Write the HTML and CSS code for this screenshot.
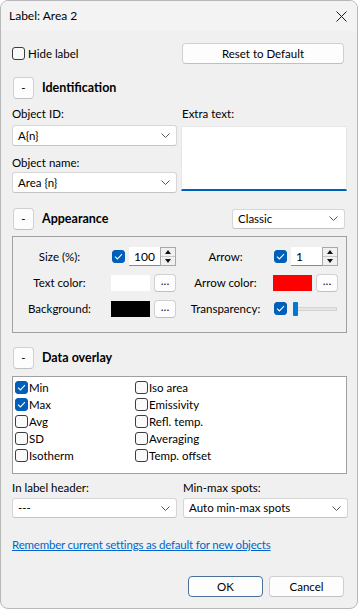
FILE: index.html
```html
<!DOCTYPE html>
<html>
<head>
<meta charset="utf-8">
<link rel="stylesheet" href="styles.css">
</head>
<body>
<div class="window">
  <div class="titlebar">
    <span class="title">Label: Area 2</span>
    <svg class="close" width="11" height="11" viewBox="0 0 11 11"><path d="M0.5 0.5 L10.5 10.5 M10.5 0.5 L0.5 10.5" stroke="#1a1a1a" stroke-width="1" fill="none"/></svg>
  </div>
  <div class="content">
    <div class="pair toprow">
      <div class="check"><span class="cb"></span><span>Hide label</span></div>
      <div class="btn reset">Reset to Default</div>
    </div>

    <div class="section-head">
      <div class="btn toggle">-</div><span class="sec-title">Identification</span>
    </div>
    <div class="pair ident">
      <div class="col">
        <div class="lbl first">Object ID:</div>
        <div class="combo c1"><span>A{n}</span><svg class="chev" width="9" height="5" viewBox="0 0 9 5"><path d="M0.5 0.5 L4.5 4.5 L8.5 0.5" stroke="#555" fill="none"/></svg></div>
        <div class="lbl second">Object name:</div>
        <div class="combo c2"><span>Area {n}</span><svg class="chev" width="9" height="5" viewBox="0 0 9 5"><path d="M0.5 0.5 L4.5 4.5 L8.5 0.5" stroke="#555" fill="none"/></svg></div>
      </div>
      <div class="col">
        <div class="lbl first">Extra text:</div>
        <div class="textarea"></div>
      </div>
    </div>

    <div class="section-head appear-head">
      <div class="btn toggle">-</div><span class="sec-title">Appearance</span>
      <div class="combo classic"><span>Classic</span><svg class="chev" width="9" height="5" viewBox="0 0 9 5"><path d="M0.5 0.5 L4.5 4.5 L8.5 0.5" stroke="#555" fill="none"/></svg></div>
    </div>
    <div class="group">
      <div class="glbl l1">Size (%):</div>
      <div class="ctrl">
        <span class="cb checked"><svg width="9" height="7" viewBox="0 0 9 7"><path d="M1 3.6 L3.4 6 L8 1.2" stroke="#fff" stroke-width="1.1" fill="none"/></svg></span>
        <div class="spin-input">100</div>
        <div class="spinner"><span class="up"></span><span class="down"></span></div>
      </div>
      <div class="glbl l2">Arrow:</div>
      <div class="ctrl">
        <span class="cb checked"><svg width="9" height="7" viewBox="0 0 9 7"><path d="M1 3.6 L3.4 6 L8 1.2" stroke="#fff" stroke-width="1.1" fill="none"/></svg></span>
        <div class="spin-input">1</div>
        <div class="spinner"><span class="up"></span><span class="down"></span></div>
      </div>

      <div class="glbl l1">Text color:</div>
      <div class="ctrl">
        <div class="swatch white"></div>
        <div class="btn dots">...</div>
      </div>
      <div class="glbl l2">Arrow color:</div>
      <div class="ctrl">
        <div class="swatch red"></div>
        <div class="btn dots">...</div>
      </div>

      <div class="glbl l1">Background:</div>
      <div class="ctrl">
        <div class="swatch black"></div>
        <div class="btn dots">...</div>
      </div>
      <div class="glbl l2">Transparency:</div>
      <div class="ctrl">
        <span class="cb checked"><svg width="9" height="7" viewBox="0 0 9 7"><path d="M1 3.6 L3.4 6 L8 1.2" stroke="#fff" stroke-width="1.1" fill="none"/></svg></span>
        <div class="slider"><span class="track"></span><span class="thumb"></span></div>
      </div>
    </div>

    <div class="section-head overlay-head">
      <div class="btn toggle">-</div><span class="sec-title">Data overlay</span>
    </div>
    <div class="overlay">
      <div class="check item"><span class="cb checked"><svg width="9" height="7" viewBox="0 0 9 7"><path d="M1 3.6 L3.4 6 L8 1.2" stroke="#fff" stroke-width="1.1" fill="none"/></svg></span><span>Min</span></div>
      <div class="check item"><span class="cb"></span><span>Iso area</span></div>
      <div class="check item"><span class="cb checked"><svg width="9" height="7" viewBox="0 0 9 7"><path d="M1 3.6 L3.4 6 L8 1.2" stroke="#fff" stroke-width="1.1" fill="none"/></svg></span><span>Max</span></div>
      <div class="check item"><span class="cb"></span><span>Emissivity</span></div>
      <div class="check item"><span class="cb"></span><span>Avg</span></div>
      <div class="check item"><span class="cb"></span><span>Refl. temp.</span></div>
      <div class="check item"><span class="cb"></span><span>SD</span></div>
      <div class="check item"><span class="cb"></span><span>Averaging</span></div>
      <div class="check item"><span class="cb"></span><span>Isotherm</span></div>
      <div class="check item"><span class="cb"></span><span>Temp. offset</span></div>
    </div>

    <div class="pair bottom">
      <div class="col">
        <div class="lbl">In label header:</div>
        <div class="combo c3"><span>---</span><svg class="chev" width="9" height="5" viewBox="0 0 9 5"><path d="M0.5 0.5 L4.5 4.5 L8.5 0.5" stroke="#555" fill="none"/></svg></div>
      </div>
      <div class="col">
        <div class="lbl">Min-max spots:</div>
        <div class="combo c3"><span>Auto min-max spots</span><svg class="chev" width="9" height="5" viewBox="0 0 9 5"><path d="M0.5 0.5 L4.5 4.5 L8.5 0.5" stroke="#555" fill="none"/></svg></div>
      </div>
    </div>

    <div class="link">Remember current settings as default for new objects</div>

    <div class="actions">
      <div class="btn action ok">OK</div>
      <div class="btn action">Cancel</div>
    </div>
  </div>
</div>
</body>
</html>
```

FILE: styles.css
```css
* { box-sizing: border-box; }
html, body { margin: 0; padding: 0; background: #ffffff; }
body {
  font-family: "Lato", "Noto Sans", sans-serif;
  font-size: 11.5px;
  color: #000;
}
.window {
  width: 358px;
  height: 609px;
  border: 1px solid #b8b8b8;
  border-radius: 8px;
  background: #f0f0f0;
  overflow: hidden;
}
.titlebar {
  height: 30px;
  background: #f3f3f3;
  display: flex;
  align-items: center;
  justify-content: space-between;
  padding: 0 10px 0 8px;
}
.title { line-height: 16px; font-size: 12px; }
.close { display: block; }
.content {
  padding: 0 10px 0 11px;
}
.pair {
  display: grid;
  grid-template-columns: 165px 165px;
  column-gap: 5px;
}
.toprow {
  margin-top: 12px;
  height: 21px;
  align-items: center;
}
.check {
  display: flex;
  align-items: center;
  gap: 3px;
  line-height: 16px;
}
.cb {
  width: 13px;
  height: 13px;
  border: 1px solid #3c3c3c;
  border-radius: 3px;
  background: #fafafa;
  display: inline-flex;
  align-items: center;
  justify-content: center;
  flex: none;
}
.cb.checked {
  background: #005fb8;
  border-color: #005fb8;
}
.cb svg { display: block; }
.btn {
  background: #fdfdfd;
  border: 1px solid #d0d0d0;
  border-bottom-color: #c0c0c0;
  border-radius: 4px;
  display: flex;
  align-items: center;
  justify-content: center;
  line-height: 16px;
}
.reset {
  width: 162px;
  height: 21px;
}
.section-head {
  display: flex;
  align-items: center;
  height: 22px;
  margin-top: 13px;
}
.toggle {
  width: 21px;
  height: 22px;
  margin-left: 1px;
  margin-right: 8px;
}
.sec-title {
  font-weight: bold;
  font-size: 12.5px;
  line-height: 16px;
}
.col { display: flex; flex-direction: column; }
.lbl {
  height: 16px;
  line-height: 16px;
}
.ident .lbl.first { margin-top: 7px; }
.ident .c1 { margin-top: 3px; }
.ident .lbl.second { margin-top: 9px; }
.ident .c2 { margin-top: 1px; }
.combo {
  height: 21px;
  background: #fff;
  border: 1px solid #d6d6d6;
  border-bottom-color: #c4c4c4;
  border-radius: 3px;
  display: flex;
  align-items: center;
  justify-content: space-between;
  padding: 0 6px 0 5px;
  line-height: 16px;
}
.chev { display: block; }
.textarea {
  margin-top: 4px;
  margin-left: -1px;
  height: 65px;
  background: #fff;
  border: 1px solid #e6e6e6;
  border-bottom: 2px solid #005fb8;
  border-radius: 2px 2px 0 0;
}
.appear-head {
  margin-top: 15px;
  height: 21px;
}
.classic {
  margin-left: auto;
  margin-right: 2px;
  width: 113px;
  height: 20px;
}
.group {
  margin-top: 7px;
  height: 97px;
  border: 1px solid #a0a0a0;
  display: grid;
  grid-template-columns: 98px 70px 92px 1fr;
  grid-auto-rows: 19px;
  row-gap: 7px;
  padding-top: 10px;
}
.glbl {
  text-align: center;
  line-height: 19px;
}
.glbl.l1 { padding-right: 5px; }
.glbl.l2 { padding-right: 3px; }
.ctrl {
  display: flex;
  align-items: center;
}
.ctrl > .cb { margin-left: 1px; }
.spin-input {
  margin-left: 4px;
  width: 31px;
  height: 19px;
  background: #fff;
  border-bottom: 1px solid #8a8a8a;
  padding-left: 5px;
  line-height: 19px;
  font-size: 12px;
}
.spinner {
  width: 16px;
  height: 19px;
  border: 1px solid #a8a8a8;
  background: #f0f0f0;
  display: flex;
  flex-direction: column;
}
.spinner span {
  flex: 1;
  display: flex;
  align-items: center;
  justify-content: center;
}
.spinner .up { border-bottom: 1px solid #c8c8c8; }
.spinner .up::after {
  content: "";
  border-left: 3.5px solid transparent;
  border-right: 3.5px solid transparent;
  border-bottom: 4px solid #111;
}
.spinner .down::after {
  content: "";
  border-left: 3.5px solid transparent;
  border-right: 3.5px solid transparent;
  border-top: 4px solid #111;
}
.swatch {
  width: 39px;
  height: 16px;
}
.swatch.white { background: #ffffff; }
.swatch.red { background: #ff0000; }
.swatch.black { background: #000000; }
.dots {
  margin-left: 4px;
  width: 22px;
  height: 18px;
  color: #101040;
  padding-bottom: 3px;
  font-size: 12px;
}
.slider {
  margin-left: 6px;
  width: 44px;
  height: 14px;
  display: flex;
  align-items: center;
  position: relative;
}
.slider .track {
  width: 44px;
  height: 4px;
  background: #e4e4e4;
  border: 1px solid #d4d4d4;
}
.slider .thumb {
  position: absolute;
  left: 0;
  top: 0;
  width: 5px;
  height: 14px;
  background: #0078d4;
  border-radius: 1px;
}
.overlay-head {
  margin-top: 14px;
  height: 21px;
}
.overlay {
  margin-top: 8px;
  height: 98px;
  background: #fff;
  border: 1px solid #a0a0a0;
  display: grid;
  grid-template-columns: 120px 1fr;
  grid-auto-rows: 17px;
  padding: 2px 0 0 2px;
  align-content: start;
}
.item { gap: 1px; }
.bottom {
  margin-top: 6px;
  column-gap: 6px;
}
.bottom .c3 {
  margin-top: 2px;
  height: 20px;
}
.link {
  margin-top: 19px;
  line-height: 16px;
  color: #0066cc;
  text-decoration: underline;
  letter-spacing: -0.2px;
}
.actions {
  margin-top: 23px;
  display: flex;
  justify-content: flex-end;
  gap: 6px;
  margin-right: 3px;
}
.action {
  width: 75px;
  height: 21px;
}
.ok {
  border-color: #4a6f99;
}
```
